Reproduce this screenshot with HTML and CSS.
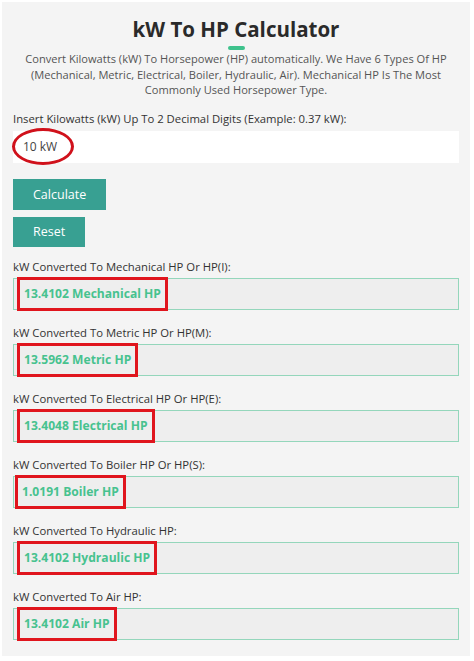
FILE: index.html
```html
<!DOCTYPE html>
<html lang="en">
<head>
<meta charset="utf-8">
<title>kW To HP Calculator</title>
<link rel="stylesheet" href="styles.css">
</head>
<body>
<main class="card">
  <header class="head">
    <h1 class="title">kW To HP Calculator</h1>
    <span class="accent"></span>
    <p class="intro">Convert Kilowatts (kW) To Horsepower (HP) automatically. We Have 6 Types Of HP (Mechanical, Metric, Electrical, Boiler, Hydraulic, Air). Mechanical HP Is The Most Commonly Used Horsepower Type.</p>
  </header>

  <label class="label" for="kw">Insert Kilowatts (kW) Up To 2 Decimal Digits (Example: 0.37 kW):</label>
  <div class="input"><span class="circle">10 kW</span></div>

  <div class="buttons">
    <button class="btn btn-calc">Calculate</button>
    <button class="btn btn-reset">Reset</button>
  </div>

  <div class="result">
    <div class="label">kW Converted To Mechanical HP Or HP(I):</div>
    <div class="box"><span class="mark">13.4102 Mechanical HP</span></div>
  </div>
  <div class="result">
    <div class="label">kW Converted To Metric HP Or HP(M):</div>
    <div class="box"><span class="mark">13.5962 Metric HP</span></div>
  </div>
  <div class="result">
    <div class="label">kW Converted To Electrical HP Or HP(E):</div>
    <div class="box"><span class="mark">13.4048 Electrical HP</span></div>
  </div>
  <div class="result">
    <div class="label">kW Converted To Boiler HP Or HP(S):</div>
    <div class="box"><span class="mark mark-tight">1.0191 Boiler HP</span></div>
  </div>
  <div class="result">
    <div class="label">kW Converted To Hydraulic HP:</div>
    <div class="box"><span class="mark">13.4102 Hydraulic HP</span></div>
  </div>
  <div class="result">
    <div class="label">kW Converted To Air HP:</div>
    <div class="box"><span class="mark">13.4102 Air HP</span></div>
  </div>
</main>
</body>
</html>
```

FILE: styles.css
```css
* { box-sizing: border-box; }
html, body { margin: 0; padding: 0; background: #ffffff; }
body {
  font-family: "Open Sans", "DejaVu Sans", sans-serif;
  color: #333;
  padding: 2px 4px 5px 2px;
}
.card {
  background: #f4f4f4;
  padding: 10px 11px 16px 11px;
  min-height: 654px;
}
.head {
  display: flex;
  flex-direction: column;
  align-items: center;
}
.title {
  margin: 4px 0 0 0;
  font-size: 20.5px;
  line-height: 26px;
  font-weight: 700;
  color: #2a2a2a;
}
.accent {
  width: 17px;
  height: 4px;
  border-radius: 2px;
  background: #3ec28c;
  margin: 4px 0 0 0;
}
.intro {
  margin: 1px 0 0 0;
  text-align: center;
  font-size: 11.1px;
  line-height: 15.5px;
  color: #555;
  padding: 0 6px;
}
.label {
  display: block;
  font-size: 11.3px;
  line-height: 14px;
  color: #333;
}
.head + .label { margin-top: 14px; }
.input {
  margin-top: 5px;
  height: 32px;
  background: #fff;
  display: flex;
  align-items: center;
  padding-left: 0;
}
.circle {
  display: inline-flex;
  align-items: center;
  justify-content: center;
  width: 62px;
  height: 37px;
  margin-left: -1px;
  padding-right: 6px;
  border: 3px solid #d0111b;
  border-radius: 50%;
  font-size: 12px;
  color: #444;
}
.buttons {
  display: flex;
  flex-direction: column;
  align-items: flex-start;
  gap: 7px;
  margin-top: 16px;
}
.btn {
  border: 0;
  background: #38a092;
  color: #fff;
  font-family: inherit;
  font-size: 12.5px;
  height: 31px;
  padding: 0 20px;
  margin: 0;
}
.btn-reset { padding: 0 20px; height: 30px; }
.result { margin-top: 16px; }
.buttons + .result { margin-top: 13px; }
.result .label { margin-bottom: 4px; }
.box {
  height: 32px;
  background: #eeeeee;
  border: 1px solid #94d6bb;
  display: flex;
  align-items: center;
  padding-left: 3px;
}
.mark {
  display: inline-flex;
  align-items: center;
  height: 34px;
  border: 3px solid #e0151d;
  padding: 0 4px 0 4px;
  font-size: 12.1px;
  font-weight: 700;
  color: #47c28f;
}
.mark-tight { margin-left: -2px; }
```
